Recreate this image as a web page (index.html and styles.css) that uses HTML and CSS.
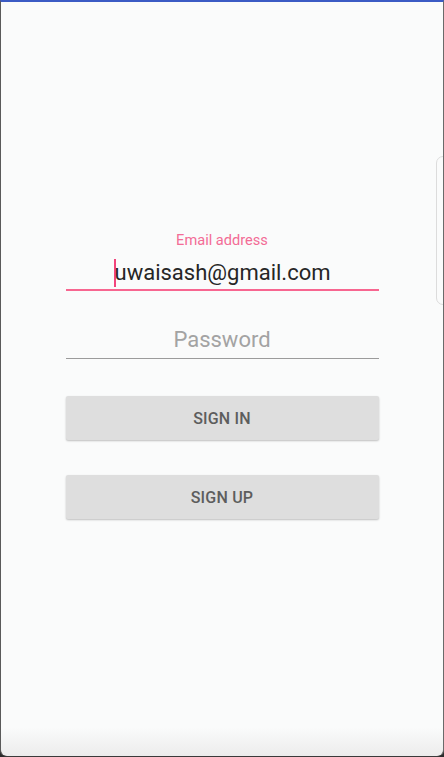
FILE: index.html
```html
<!DOCTYPE html>
<html>
<head>
<meta charset="utf-8">
<link rel="stylesheet" href="styles.css">
</head>
<body>
<div class="screen">
  <div class="side-tab"></div>
  <form class="form">
    <label class="field-label">Email address</label>
    <div class="input input-focused"><span class="caret"></span>uwaisash@gmail.com</div>
    <div class="input input-empty">Password</div>
    <button type="button" class="btn btn-first">SIGN IN</button>
    <button type="button" class="btn btn-second">SIGN UP</button>
  </form>
</div>
</body>
</html>
```
FILE: styles.css
```css
html, body {
  margin: 0;
  padding: 0;
  background: #2b2b2b;
}
.screen {
  position: relative;
  box-sizing: border-box;
  width: 444px;
  height: 757px;
  border-top: 2px solid #3b5bc4;
  border-left: 1px solid #5a5a5a;
  border-right: 1px solid #6a6a6a;
  border-bottom: 1px solid #3a3a3a;
  border-radius: 0 0 7px 7px;
  background: linear-gradient(to bottom, #fafbfb 0, #fafbfb 725px, #ececec 100%);
  font-family: Roboto, "Liberation Sans", sans-serif;
  overflow: hidden;
}
.side-tab {
  position: absolute;
  right: -8px;
  top: 154px;
  width: 13px;
  height: 147px;
  border: 1px solid #dcdcdc;
  border-radius: 7px;
}
.form {
  width: 313px;
  margin: 0 auto;
  padding-top: 230px;
  display: flex;
  flex-direction: column;
  align-items: stretch;
}
.field-label {
  text-align: center;
  font-size: 14.6px;
  line-height: 17px;
  color: #f36c96;
  margin-bottom: 10px;
}
.input {
  text-align: center;
  font-size: 22px;
  line-height: 28px;
  height: 28px;
}
.input-focused {
  color: #262626;
  padding-bottom: 2px;
  border-bottom: 2px solid #f76690;
}
.caret {
  display: inline-block;
  width: 2px;
  height: 28px;
  vertical-align: top;
  background: #f2447c;
  margin-right: -1px;
}
.input-empty {
  margin-top: 35px;
  color: #a3a3a3;
  padding-bottom: 4px;
  border-bottom: 1px solid #9b9b9b;
}
.btn {
  height: 44px;
  border: 0;
  border-radius: 2px;
  background: #dedede;
  box-shadow: 0 1px 2px rgba(0,0,0,0.24);
  color: #5d5d5d;
  font-family: Roboto, "Liberation Sans", sans-serif;
  font-weight: 500;
  font-size: 16px;
  letter-spacing: 0.2px;
  padding: 1px 0 0 0;
}
.btn-first {
  margin-top: 37px;
}
.btn-second {
  margin-top: 35px;
}
```
